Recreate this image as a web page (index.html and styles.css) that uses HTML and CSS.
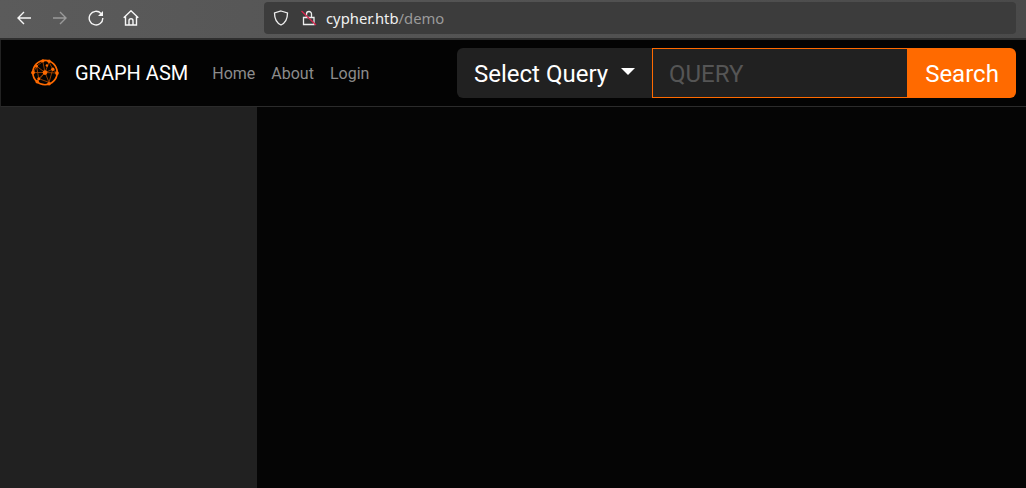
FILE: index.html
```html
<!doctype html>
<html lang="en">
<head>
	<meta charset="UTF-8">
	<title>Document</title>
	<link rel="stylesheet" href="styles.css">
</head>
<body>
	<div class="toolbar">
		<svg class="tb_icon back" viewBox="0 0 16 16"><path d="M15 8H2M8 2L2 8l6 6"/></svg>
		<svg class="tb_icon fwd" viewBox="0 0 16 16"><path d="M1 8h13M8 2l6 6-6 6"/></svg>
		<svg class="tb_icon reload" viewBox="0 0 16 16"><path d="M13 3.500A6.800 6.800 0 1 0 14.800 8"/><path class="solid" d="M15 1v5h-5z"/></svg>
		<svg class="tb_icon home" viewBox="0 0 16 16"><path d="M.7 7.800L8 .8l7.300 7M2.500 6.500V15h11V6.500M6 15V10.800a2 2 0 0 1 4 0V15"/></svg>
		<div class="urlbar">
			<svg class="shield" viewBox="0 0 16 16"><path d="M8 1L14.500 3c0 6.500-1.800 9.800-6.500 12C3.300 12.800 1.500 9.500 1.500 3z"/></svg>
			<svg class="lock" viewBox="0 0 16 16"><path d="M5.500 7V4a2.500 2.500 0 0 1 5 0V7M2.500 7.500h10.500v7H2.500z"/><path class="slash" d="M.5 1l14.500 14"/></svg>
			<span class="url">cypher.htb<span class="url_path">/demo</span></span>
		</div>
	</div>
	<nav class="navbar">
		<svg class="logo" viewBox="0 0 32 32">
			<circle class="logo_ring" cx="16" cy="15.500" r="13"/>
			<path class="logo_web" d="M13.700 3.700L16 15.500L20.300 4.300M3.700 15.500H16L28.300 16M7.700 25.300L16 15.500L20.300 26M7 8.700L16 15.500L24.300 12M7 8.700L9.300 22L16 15.500M24.300 12L20.300 26M20.300 4.300L24.300 12L28.300 16M13.700 3.700L7 8.700L3.700 15.500M9.300 22L20.300 26"/>
			<g class="logo_dots">
				<circle cx="16" cy="15.500" r="2.500"/>
				<circle cx="13.700" cy="3" r="1.800"/><circle cx="20.300" cy="3.500" r="1.800"/>
				<circle cx="3.200" cy="15.500" r="2"/><circle cx="28.800" cy="16" r="2"/>
				<circle cx="7.700" cy="25.300" r="1.900"/><circle cx="20.300" cy="27.500" r="1.900"/>
				<circle cx="9.300" cy="22" r="1.600"/><circle cx="24.300" cy="12" r="1.800"/>
				<circle cx="7" cy="8.700" r="1.500"/><circle cx="18" cy="8" r="1.300"/>
			</g>
		</svg>
		<span class="brand">GRAPH ASM</span>
		<a class="nav_link">Home</a>
		<a class="nav_link">About</a>
		<a class="nav_link">Login</a>
		<form class="search">
			<div class="select">Select Query<i class="caret"></i></div>
			<div class="query">QUERY</div>
			<div class="search_btn">Search</div>
		</form>
	</nav>
	<div class="main">
		<div class="sidebar"></div>
		<div class="graph"></div>
	</div>
</body>
</html>
```

FILE: styles.css
```css
html, body {height: 100%;}
body {
	margin: 0;
	overflow: hidden;
	display: flex;
	flex-direction: column;
	background-color: #050505;
	font-family: Roboto, "Liberation Sans", sans-serif;
}

.toolbar {
	flex: none;
	height: 40px;
	box-sizing: border-box;
	display: flex;
	align-items: center;
	padding: 0 10px 2px 16px;
	background: linear-gradient(90deg, #5b5b5b, #565656 30%, #4a4a4a);
	border-bottom: 2px solid #2f2f2f;
}
.tb_icon {
	width: 16px;
	height: 16px;
	fill: none;
	stroke: #f6f6f6;
	stroke-width: 1.400;
	margin-right: 20px;
}
.tb_icon .solid {fill: #f6f6f6; stroke: none;}
.tb_icon.fwd {stroke: #9a9a9a;}
.tb_icon.home {margin-right: 0; margin-left: -1px;}

.urlbar {
	flex: 1;
	height: 32px;
	margin-left: 125px;
	box-sizing: border-box;
	display: flex;
	align-items: center;
	padding-left: 9px;
	border-radius: 4px;
	background-color: #3c3c3c;
}
.shield {
	width: 16px;
	height: 16px;
	fill: none;
	stroke: #eeeeee;
	stroke-width: 1.300;
	margin-right: 12px;
}
.lock {
	width: 16px;
	height: 16px;
	fill: none;
	stroke: #eeeeee;
	stroke-width: 1.300;
	margin-right: 9px;
}
.lock .slash {stroke: #d7264f;}
.url {
	font-family: "Noto Sans", sans-serif;
	font-size: 14.8px;
	color: #f0f0f0;
}
.url_path {color: #9a9a9a;}

.navbar {
	flex: none;
	height: 67px;
	box-sizing: border-box;
	display: flex;
	align-items: center;
	padding: 0 10px 0 29px;
	background-color: #030303;
	border-left: 1px solid #222222;
	border-bottom: 1px solid #2b2b2b;
}
.logo {
	width: 30px;
	height: 30px;
	margin-right: 15px;
}
.logo_ring {fill: none; stroke: #ff6a00; stroke-width: 1.800;}
.logo_web {fill: none; stroke: #a84600; stroke-width: .9;}
.logo_dots {fill: #ff6a00;}
.brand {
	font-size: 20px;
	color: #ffffff;
	margin-right: 24px;
}
.nav_link {
	font-size: 16px;
	color: #8c8c8c;
	margin-right: 16px;
}

.search {
	display: flex;
	height: 50px;
	margin: 0 0 0 auto;
	font-size: 24px;
	line-height: 52px;
}
.select {
	width: 195px;
	box-sizing: border-box;
	padding-left: 17px;
	color: #ffffff;
	background-color: #212121;
	border-radius: 6px 0 0 6px;
}
.caret {
	display: inline-block;
	margin-left: 13px;
	vertical-align: 7px;
	border-top: 7px solid #ffffff;
	border-left: 7px solid transparent;
	border-right: 7px solid transparent;
}
.query {
	width: 256px;
	box-sizing: border-box;
	padding-left: 16px;
	line-height: 50px;
	color: #555555;
	background-color: #212121;
	border: 1px solid #ff6a00;
}
.search_btn {
	width: 108px;
	text-align: center;
	color: #ffffff;
	background-color: #ff6a00;
	border-radius: 0 6px 6px 0;
}

.main {
	flex: 1;
	display: flex;
}
.sidebar {
	width: 257px;
	background-color: #212121;
}
.graph {
	flex: 1;
	background-color: #050505;
}
```
